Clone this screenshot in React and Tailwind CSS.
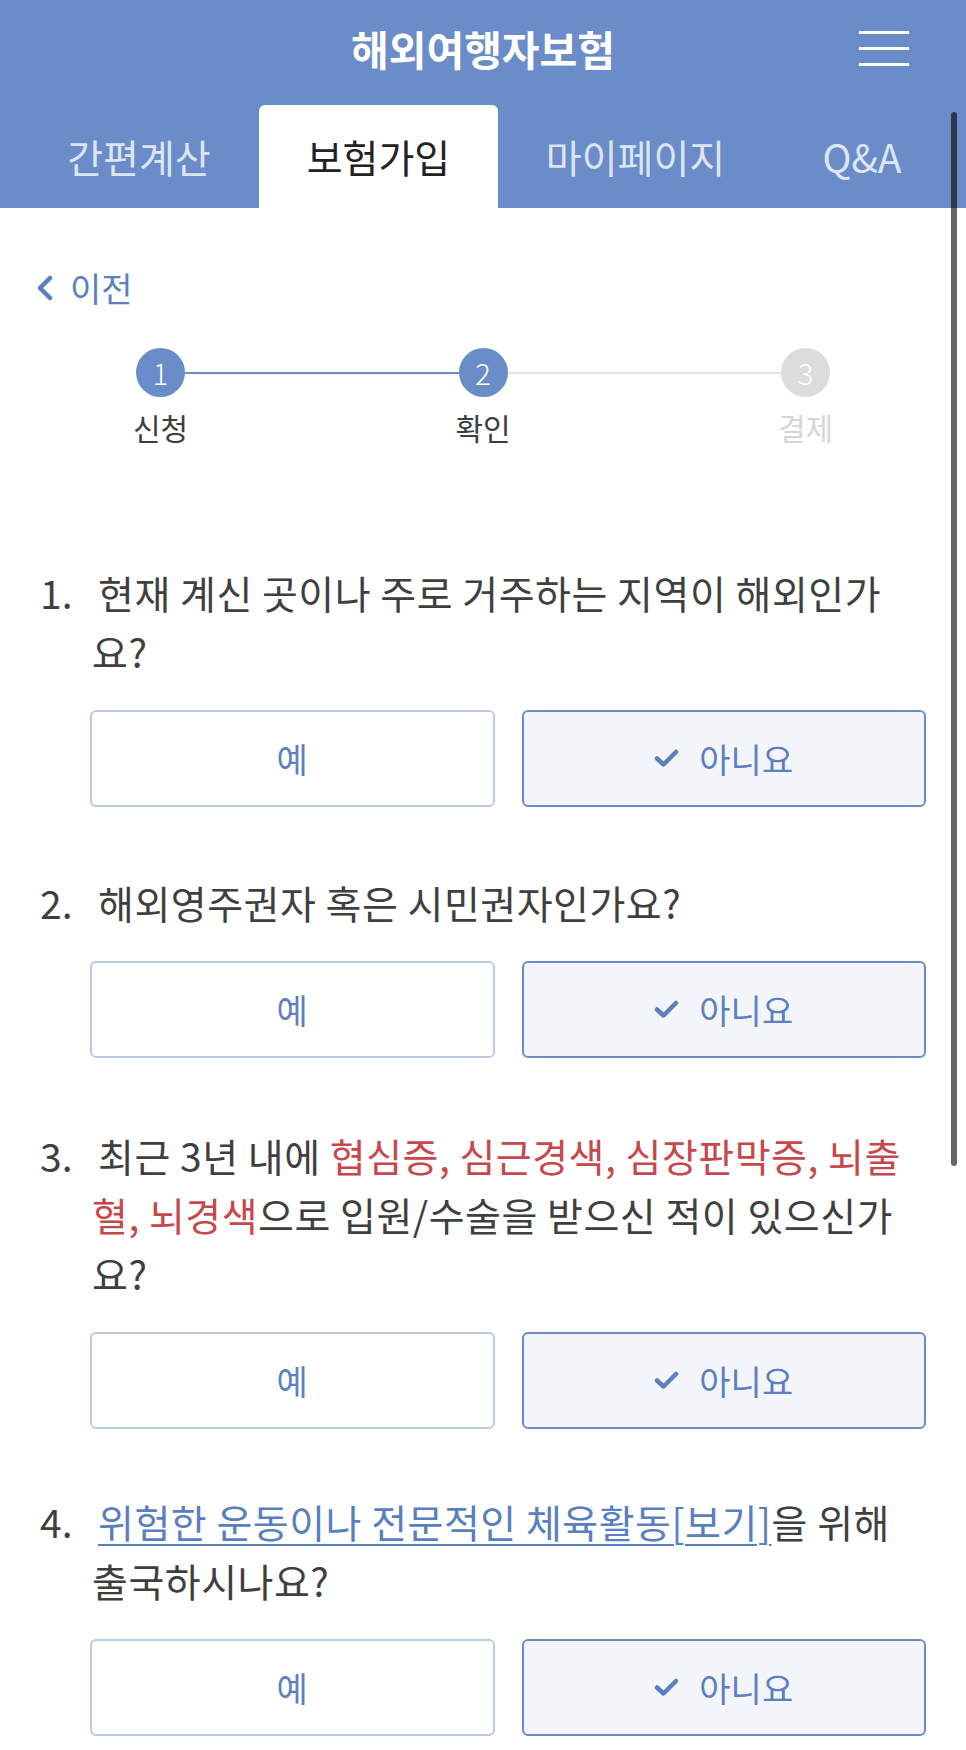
import React from 'react';

const questions = [
  {
    no: '1.',
    gap: 'mt-0',
    lines: [['현재 계신 곳이나 주로 거주하는 지역이 해외인가'], ['요?']],
  },
  {
    no: '2.',
    gap: 'mt-[66px]',
    lines: [['해외영주권자 혹은 시민권자인가요?']],
  },
  {
    no: '3.',
    gap: 'mt-[68px]',
    lines: [
      ['최근 3년 내에 ', { red: '협심증, 심근경색, 심장판막증, 뇌출' }],
      [{ red: '혈, 뇌경색' }, '으로 입원/수술을 받으신 적이 있으신가'],
      ['요?'],
    ],
  },
  {
    no: '4.',
    gap: 'mt-[63px]',
    lines: [[{ link: '위험한 운동이나 전문적인 체육활동[보기]' }, '을 위해'], ['출국하시나요?']],
  },
];

function Part({ part }) {
  if (typeof part === 'string') return <>{part}</>;
  if (part.red) return <span className="text-[#c8474b]">{part.red}</span>;
  return (
    <span className="text-[#5a7fc0] underline decoration-[1.5px] underline-offset-[6px]">{part.link}</span>
  );
}

function CheckIcon() {
  return (
    <svg width="25" height="19" viewBox="0 0 25 19" fill="none">
      <path d="M3 9.5 L9.5 15.5 L22 3" stroke="#5b7fbf" strokeWidth="4.5" strokeLinecap="round" strokeLinejoin="round" />
    </svg>
  );
}

function Question({ q }) {
  return (
    <div className={q.gap}>
      <p className="pl-[52px] indent-[-52px] text-[39px] leading-[59px] tracking-[0.5px] text-[#3f3f3f]">
        <span className="inline-block w-[58px] indent-0 tracking-normal">{q.no}</span>
        {q.lines.map((line, i) => (
          <React.Fragment key={i}>
            {i > 0 && <br />}
            {line.map((part, j) => (
              <Part key={j} part={part} />
            ))}
          </React.Fragment>
        ))}
      </p>
      <div className="mt-[29px] ml-[50px] grid grid-cols-2 gap-[27px]">
        <button className="h-[97px] rounded-[6px] border-2 border-[#bccbe5] bg-white text-[34px] text-[#5b7fbf]">
          예
        </button>
        <button className="h-[97px] rounded-[6px] border-2 border-[#6a8cc8] bg-[#f3f5fa] text-[34px] text-[#5b7fbf] flex items-center justify-center gap-[20px]">
          <CheckIcon />
          <span>아니요</span>
        </button>
      </div>
    </div>
  );
}

export default function App() {
  return (
    <div className="relative min-h-screen w-full bg-white font-['Noto_Sans_CJK_KR',sans-serif]">
      {/* header */}
      <div className="h-[208px] bg-[#6a8cc8]">
        <div className="grid h-[96px] grid-cols-[1fr_auto_1fr] items-center">
          <div />
          <h1 className="text-[41px] font-bold text-white leading-none">해외여행자보험</h1>
          <div className="flex justify-end pr-[57px]">
            <div className="flex w-[50px] flex-col gap-[13px]">
              <span className="h-[3px] bg-white" />
              <span className="h-[3px] bg-white" />
              <span className="h-[3px] bg-white" />
            </div>
          </div>
        </div>
        <div className="mt-[9px] flex h-[103px] pl-[19px] text-[39px]">
          <div className="flex w-[240px] items-center justify-center text-[#dde5f3]">간편계산</div>
          <div className="flex w-[239px] items-center justify-center rounded-t-[6px] bg-white text-[#222]">보험가입</div>
          <div className="flex w-[275px] items-center justify-center text-[#dde5f3]">마이페이지</div>
          <div className="flex w-[178px] items-center justify-center text-[#dde5f3]">Q&amp;A</div>
        </div>
      </div>

      {/* back link */}
      <div className="mt-[60px] flex h-[40px] items-center pl-[35px] text-[#5b7fbf]">
        <svg width="19" height="26" viewBox="0 0 19 26" fill="none">
          <path d="M15 3 L5 13 L15 23" stroke="#5b7fbf" strokeWidth="4.5" strokeLinecap="round" strokeLinejoin="round" />
        </svg>
        <span className="ml-[16px] text-[34px] leading-none">이전</span>
      </div>

      {/* stepper */}
      <div className="mt-[40px] ml-[136px] w-[694px]">
        <div className="flex items-center">
          <div className="flex h-[49px] w-[49px] items-center justify-center rounded-full bg-[#6a8cc8] text-[29px] font-light text-white">1</div>
          <div className="h-[2px] flex-1 bg-[#6a8cc8]" />
          <div className="flex h-[49px] w-[49px] items-center justify-center rounded-full bg-[#6a8cc8] text-[29px] font-light text-white">2</div>
          <div className="h-[2px] flex-1 bg-[#e4e4e4]" />
          <div className="flex h-[49px] w-[49px] items-center justify-center rounded-full bg-[#dcdcdc] text-[29px] font-light text-white">3</div>
        </div>
        <div className="mt-[13px] flex text-[30px] leading-[34px]">
          <div className="flex w-[49px] justify-center whitespace-nowrap text-[#3d3d3d]">신청</div>
          <div className="flex-1" />
          <div className="flex w-[49px] justify-center whitespace-nowrap text-[#3d3d3d]">확인</div>
          <div className="flex-1" />
          <div className="flex w-[49px] justify-center whitespace-nowrap text-[#d6d6d6]">결제</div>
        </div>
      </div>

      {/* questions */}
      <div className="mt-[119px] px-[40px] pb-[14px]">
        {questions.map((q) => (
          <Question key={q.no} q={q} />
        ))}
      </div>

      {/* scroll indicator */}
      <div className="absolute right-[9px] top-[112px] h-[1054px] w-[6px] rounded-full bg-black/60" />
    </div>
  );
}
